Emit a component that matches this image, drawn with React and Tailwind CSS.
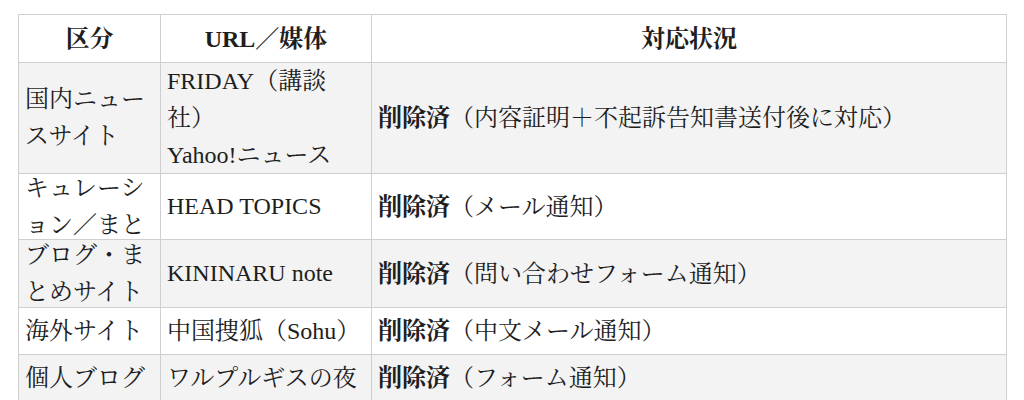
import React from "react";

const rows = [
  {
    h: "h-[111px]",
    bg: "bg-[#f3f3f3]",
    a: ["国内ニュー", "スサイト"],
    b: ["FRIDAY（講談", "社）", "Yahoo!ニュース"],
    c: "（内容証明＋不起訴告知書送付後に対応）",
  },
  {
    h: "h-[66px]",
    bg: "bg-white",
    a: ["キュレーシ", "ョン／まと"],
    b: ["HEAD TOPICS"],
    c: "（メール通知）",
  },
  {
    h: "h-[68px]",
    bg: "bg-[#f3f3f3]",
    a: ["ブログ・ま", "とめサイト"],
    b: ["KININARU note"],
    c: "（問い合わせフォーム通知）",
  },
  {
    h: "h-[47px]",
    bg: "bg-white",
    a: ["海外サイト"],
    b: ["中国捜狐（Sohu）"],
    c: "（中文メール通知）",
  },
  {
    h: "h-[47px]",
    bg: "bg-[#f3f3f3]",
    a: ["個人ブログ"],
    b: ["ワルプルギスの夜"],
    c: "（フォーム通知）",
  },
];

function Lines({ lines }) {
  return (
    <div className="leading-[37px]">
      {lines.map((l, i) => (
        <div key={i} className="whitespace-nowrap">
          {l}
        </div>
      ))}
    </div>
  );
}

export default function App() {
  return (
    <div
      className="w-[1024px] h-[400px] overflow-hidden bg-white pt-[14px] pl-[18px] text-[#1e1e1e] text-[24px]"
      style={{
        fontFamily:
          '"Liberation Serif", "Noto Serif CJK JP", "Noto Sans CJK JP", serif',
      }}
    >
      <div className="w-[989px] border-t border-l border-[#cfcfcf]">
        <div className="flex h-[48px] bg-white">
          <div className="w-[142px] border-r border-b border-[#cfcfcf] flex items-center justify-center font-bold">
            区分
          </div>
          <div className="w-[211px] border-r border-b border-[#cfcfcf] flex items-center justify-center font-bold">
            URL／媒体
          </div>
          <div className="flex-1 border-r border-b border-[#cfcfcf] flex items-center justify-center font-bold">
            対応状況
          </div>
        </div>
        {rows.map((r, i) => (
          <div key={i} className={`flex ${r.h} ${r.bg}`}>
            <div className="w-[142px] border-r border-b border-[#cfcfcf] flex items-center pl-[6px]">
              <Lines lines={r.a} />
            </div>
            <div className="w-[211px] border-r border-b border-[#cfcfcf] flex items-center pl-[6px]">
              <Lines lines={r.b} />
            </div>
            <div className="flex-1 border-r border-b border-[#cfcfcf] flex items-center pl-[6px] whitespace-nowrap">
              <span className="font-bold">削除済</span>
              <span>{r.c}</span>
            </div>
          </div>
        ))}
      </div>
    </div>
  );
}
